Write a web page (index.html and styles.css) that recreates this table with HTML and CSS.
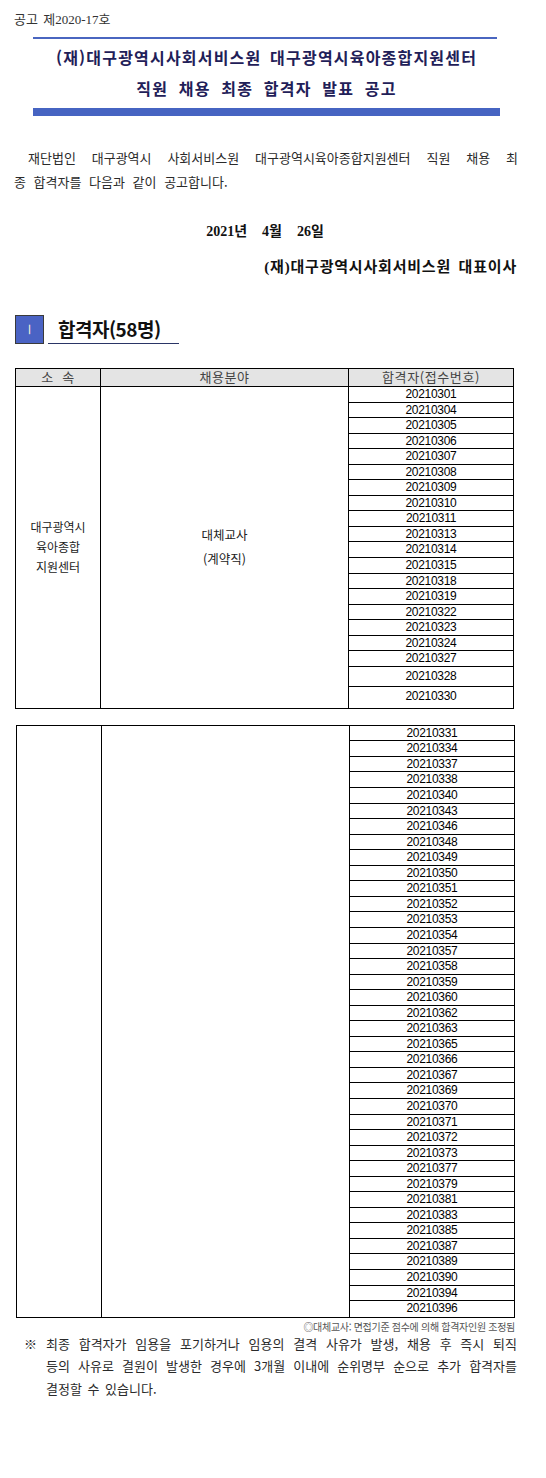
FILE: index.html
```html
<!DOCTYPE html>
<html lang="ko">
<head>
<meta charset="utf-8">
<title>직원 채용 최종 합격자 발표 공고</title>
<link rel="stylesheet" href="styles.css">
</head>
<body>
<div class="page">
  <div class="doc-no">공고 <span class="sp"></span>제2020-17호</div>
  <div class="head">
    <div class="rule-thin"></div>
    <h1 class="title">
      <span class="tl">(재)대구광역시사회서비스원 대구광역시육아종합지원센터</span>
      <span class="tl">직원 채용 최종 합격자 발표 공고</span>
    </h1>
    <div class="rule-thick"></div>
  </div>

  <div class="intro">
    <p class="jl">재단법인 대구광역시 사회서비스원 대구광역시육아종합지원센터 직원 채용 최</p>
    <p class="ll">종 합격자를 다음과 같이 공고합니다.</p>
  </div>

  <div class="date"><span>2021년</span><span>4월</span><span>26일</span></div>
  <div class="sign">(재)대구광역시사회서비스원 대표이사</div>

  <div class="sec">
    <div class="sec-box">Ⅰ</div>
    <div class="sec-title">합격자(58명)</div>
  </div>

  <div class="tbl t1">
    <div class="thead">
      <div class="th">소 &nbsp;속</div>
      <div class="th">채용분야</div>
      <div class="th">합격자(접수번호)</div>
    </div>
    <div class="tbody">
      <div class="c1"><span>대구광역시</span><span>육아종합</span><span>지원센터</span></div>
      <div class="c2"><span>대체교사</span><span>(계약직)</span></div>
      <div class="c3">
        <div class="n">20210301</div>
        <div class="n">20210304</div>
        <div class="n">20210305</div>
        <div class="n">20210306</div>
        <div class="n">20210307</div>
        <div class="n">20210308</div>
        <div class="n">20210309</div>
        <div class="n">20210310</div>
        <div class="n">20210311</div>
        <div class="n">20210313</div>
        <div class="n">20210314</div>
        <div class="n">20210315</div>
        <div class="n">20210318</div>
        <div class="n">20210319</div>
        <div class="n">20210322</div>
        <div class="n">20210323</div>
        <div class="n">20210324</div>
        <div class="n">20210327</div>
        <div class="n tall">20210328</div>
        <div class="n tall last">20210330</div>
      </div>
    </div>
  </div>

  <div class="tbl t2">
    <div class="tbody">
      <div class="c1"></div>
      <div class="c2"></div>
      <div class="c3">
        <div class="n">20210331</div>
        <div class="n">20210334</div>
        <div class="n">20210337</div>
        <div class="n">20210338</div>
        <div class="n">20210340</div>
        <div class="n">20210343</div>
        <div class="n">20210346</div>
        <div class="n">20210348</div>
        <div class="n">20210349</div>
        <div class="n">20210350</div>
        <div class="n">20210351</div>
        <div class="n">20210352</div>
        <div class="n">20210353</div>
        <div class="n">20210354</div>
        <div class="n">20210357</div>
        <div class="n">20210358</div>
        <div class="n">20210359</div>
        <div class="n">20210360</div>
        <div class="n">20210362</div>
        <div class="n">20210363</div>
        <div class="n">20210365</div>
        <div class="n">20210366</div>
        <div class="n">20210367</div>
        <div class="n">20210369</div>
        <div class="n">20210370</div>
        <div class="n">20210371</div>
        <div class="n">20210372</div>
        <div class="n">20210373</div>
        <div class="n">20210377</div>
        <div class="n">20210379</div>
        <div class="n">20210381</div>
        <div class="n">20210383</div>
        <div class="n">20210385</div>
        <div class="n">20210387</div>
        <div class="n">20210389</div>
        <div class="n">20210390</div>
        <div class="n">20210394</div>
        <div class="n last">20210396</div>
      </div>
    </div>
  </div>

  <div class="remark">◎대체교사: 면접기준 점수에 의해 합격자인원 조정됨</div>

  <div class="notice">
    <div class="mark">※</div>
    <div class="notice-body">
      <p class="jl">최종 합격자가 임용을 포기하거나 임용의 결격 사유가 발생, 채용 후 즉시 퇴직</p>
      <p class="jl">등의 사유로 결원이 발생한 경우에 3개월 이내에 순위명부 순으로 추가 합격자를</p>
      <p class="ll">결정할 수 있습니다.</p>
    </div>
  </div>
</div>
</body>
</html>
```

FILE: styles.css
```css
* { box-sizing: border-box; }
html, body { margin: 0; padding: 0; background: #fff; }
body {
  font-family: "Noto Sans CJK KR", "Liberation Sans", sans-serif;
  color: #222;
  width: 546px;
}
p { margin: 0; }
.page { width: 546px; padding-bottom: 60px; }

.doc-no {
  font-family: "Liberation Serif", "Noto Sans CJK KR", serif;
  font-size: 13px;
  line-height: 16px;
  padding: 12px 0 0 14px;
  color: #333;
}
.doc-no .sp { display: inline-block; width: 2px; }

.head { margin: 9px 46px 0 33px; }
.rule-thin { height: 2px; background: #4a66c0; margin-right: 3px; }
.title {
  margin: 3px 0 0;
  font-size: 16px;
  font-weight: 700;
  color: #1f2058;
  text-align: center;
  line-height: 31px;
  letter-spacing: 1.2px;
  word-spacing: 3px;
  display: flex;
  flex-direction: column;
}
.title .tl:last-child { word-spacing: 5px; }
.rule-thick { height: 8px; background: #4664c2; margin-top: 4px; }

.intro {
  margin-top: 30px;
  padding: 0 28px 0 14px;
  font-size: 13px;
  line-height: 24px;
  color: #2a2a2a;
  word-spacing: 4px;
}
.jl { text-align: justify; text-align-last: justify; }
.intro .jl { text-indent: 14px; }
.ll { text-align: left; }

.date {
  margin-top: 26px;
  font-family: "Liberation Serif", "Noto Sans CJK KR", serif;
  font-weight: 700;
  font-size: 14px;
  line-height: 24px;
  display: flex;
  justify-content: center;
  gap: 15px;
  padding-right: 16px;
  color: #111;
}
.sign {
  margin-top: 11px;
  font-family: "Liberation Serif", "Noto Sans CJK KR", serif;
  font-weight: 700;
  font-size: 15px;
  line-height: 24px;
  text-align: right;
  padding-right: 29px;
  color: #111;
  letter-spacing: 0.8px;
  word-spacing: 3px;
}

.sec {
  margin: 36px 0 0 15px;
  display: flex;
  align-items: stretch;
}
.sec-box {
  width: 29px;
  height: 29px;
  background: #4a63c4;
  border: 1px solid #3a3a3a;
  color: #f4f0d8;
  font-family: "Liberation Sans", sans-serif;
  font-size: 13px;
  line-height: 27px;
  text-align: center;
}
.sec-title {
  margin-left: 4px;
  width: 131px;
  border-bottom: 1px solid #2a3566;
  padding-left: 10px;
  font-size: 19px;
  font-weight: 700;
  line-height: 28px;
  color: #111;
  letter-spacing: -0.5px;
}

.tbl {
  margin: 24px 0 0 15px;
  width: 499px;
  border: 1px solid #000;
  border-bottom-width: 1.5px;
}
.tbl.t2 { margin: 16px 0 0 16px; }
.thead {
  display: grid;
  grid-template-columns: 84px 248px 1fr;
  background: #e4e4e4;
  border-bottom: 1px solid #000;
  height: 18px;
}
.th {
  font-size: 13px;
  line-height: 16px;
  text-align: center;
  color: #444;
  letter-spacing: 0.6px;
}
.th + .th { border-left: 1px solid #000; }
.tbody {
  display: grid;
  grid-template-columns: 84px 248px 1fr;
}
.c1, .c2 {
  display: flex;
  flex-direction: column;
  justify-content: center;
  align-items: center;
  color: #222;
}
.c1 { font-size: 12px; line-height: 20px; }
.c2 { border-left: 1px solid #000; font-size: 12.5px; line-height: 24px; }
.c3 { border-left: 1px solid #000; display: flex; flex-direction: column; }
.n {
  height: 15.56px;
  border-bottom: 1px solid #000;
  font-family: "Liberation Sans", sans-serif;
  font-size: 12px;
  line-height: 14.5px;
  text-align: center;
  color: #000;
  letter-spacing: -0.3px;
}
.n.tall { height: 20.5px; line-height: 19.5px; }
.n.last { border-bottom: none; }

.remark {
  margin-top: 2px;
  padding-right: 31px;
  text-align: right;
  font-size: 10px;
  line-height: 13px;
  color: #555;
  letter-spacing: -0.3px;
}
.notice {
  display: flex;
  padding: 0 29px 0 24px;
  font-size: 13px;
  line-height: 22.5px;
  color: #2a2a2a;
}
.mark { width: 22px; flex: none; }
.notice-body { flex: 1; word-spacing: 2px; }
```
